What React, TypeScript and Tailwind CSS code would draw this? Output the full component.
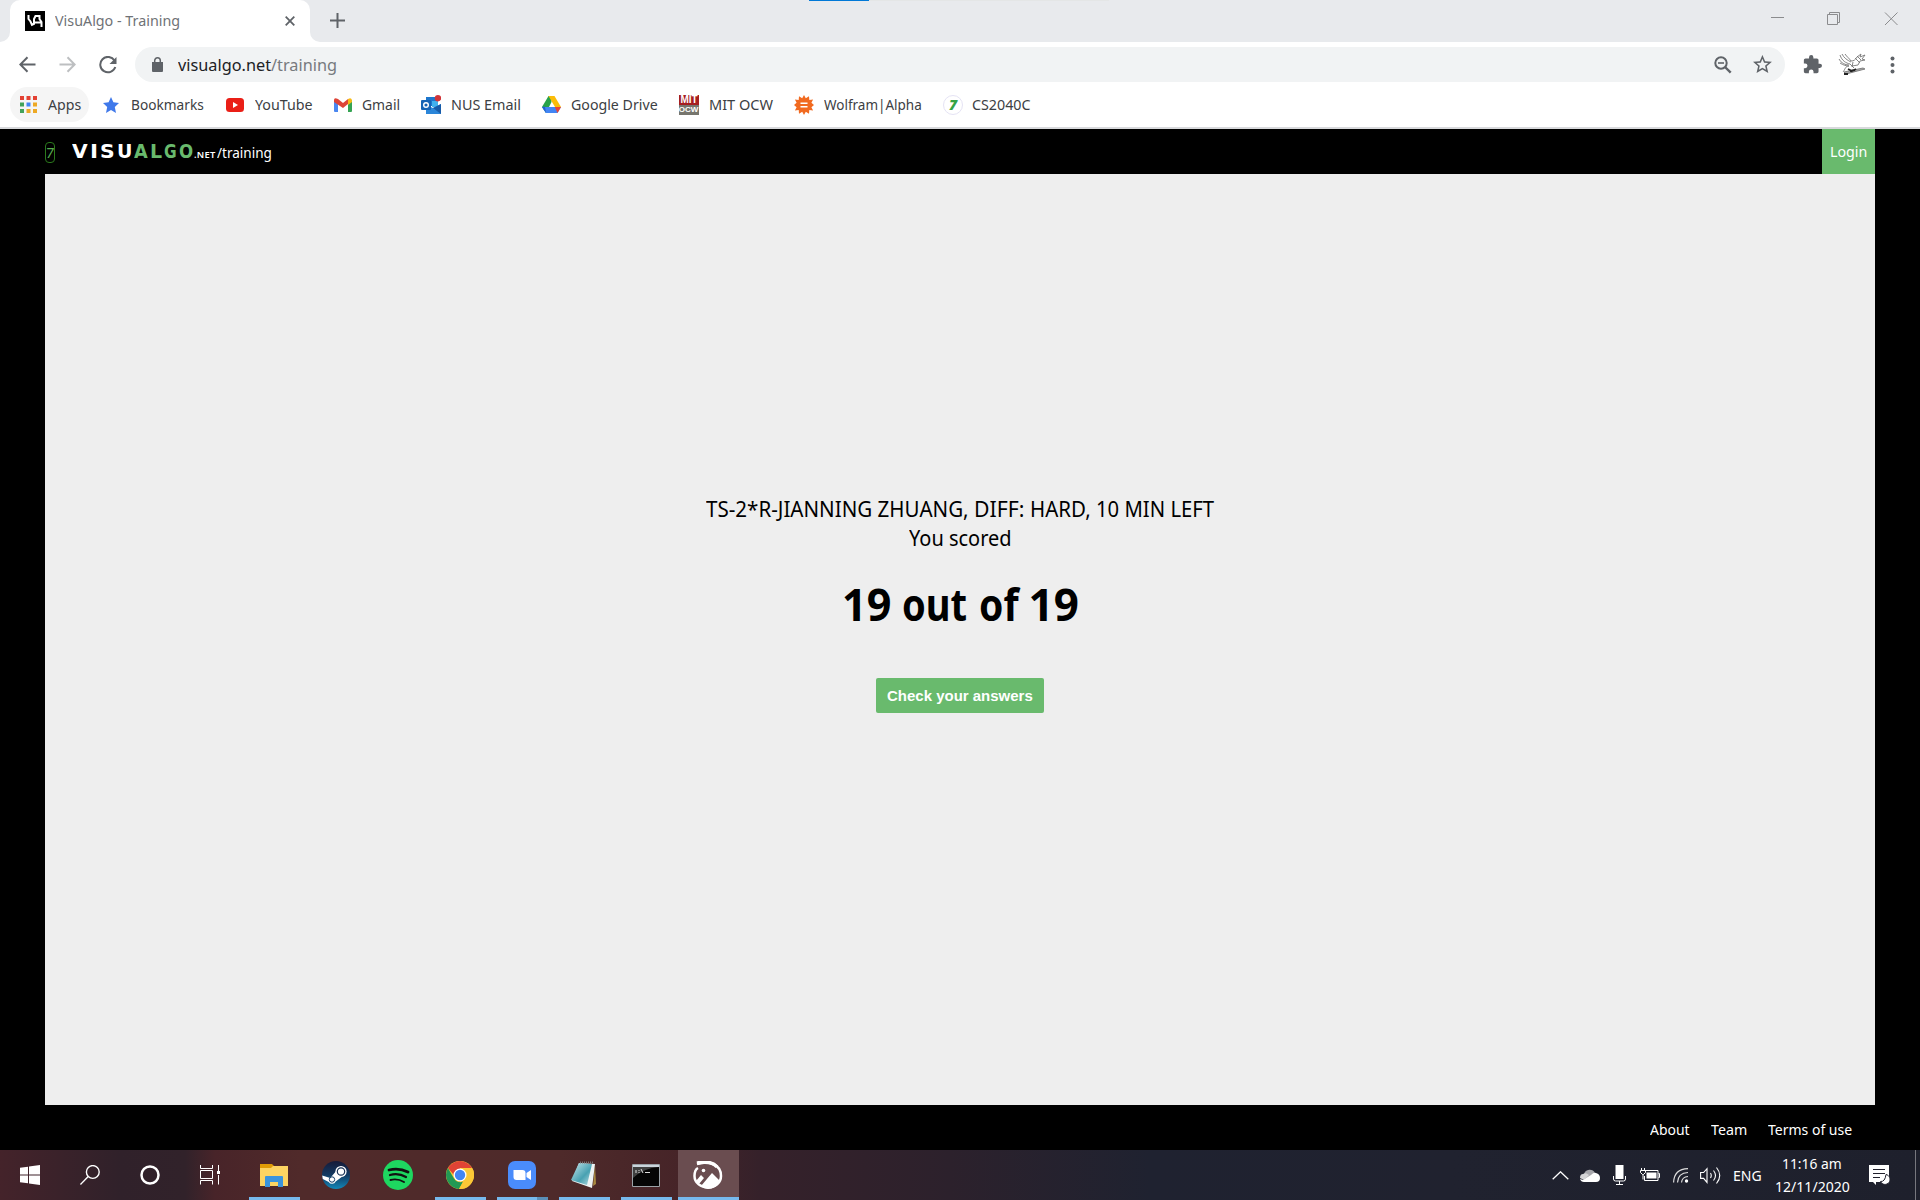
import { useLayoutEffect, useRef, useState } from "react";
import type { ReactNode } from "react";

/* Squeezes or stretches a line of text to the width of its box. */
function Fit({ className, children }: { className: string; children: ReactNode }) {
  const outer = useRef<HTMLSpanElement>(null);
  const inner = useRef<HTMLSpanElement>(null);
  const [scale, setScale] = useState(1);
  useLayoutEffect(() => {
    if (outer.current && inner.current) setScale(outer.current.clientWidth / inner.current.offsetWidth);
  }, []);
  return (
    <span ref={outer} className={"block shrink-0 whitespace-nowrap " + className}>
      <span ref={inner} className="inline-block origin-left" style={{ transform: `scaleX(${scale})` }}>
        {children}
      </span>
    </span>
  );
}

function TabStrip() {
  return (
    <div className="flex h-[42px] bg-[#e8eaed]">
      <div className="relative ml-[10px] flex h-[42px] w-[300px] items-center rounded-t-[10px] bg-white pl-[15px]">
        <svg className="absolute -left-[10px] bottom-0 size-[10px]" viewBox="0 0 10 10"><path d="M10 0v10H0A10 10 0 0 0 10 0Z" fill="#fff" /></svg>
        <svg className="absolute -right-[10px] bottom-0 size-[10px]" viewBox="0 0 10 10"><path d="M0 0v10h10A10 10 0 0 1 0 0Z" fill="#fff" /></svg>
        <svg className="size-5" viewBox="0 0 20 20" fill="none" stroke="#fff" strokeWidth="2">
          <path d="M0 0h20v20H0z" fill="#000" stroke="none" />
          <path d="M3.500 4v4l2 2.500 1.500 3.500 2-1V8l1.500-3h4v3l2 3v5M9 11.500h7" />
        </svg>
        <Fit className="mb-[2px] ml-[10px] w-[125px] text-[15px] leading-5 text-[#6f7276]">VisuAlgo - Training</Fit>
        <svg className="ml-[105px] size-[10px]" viewBox="0 0 10 10"><path d="M.7.7l8.600 8.600M9.300.7L.7 9.300" stroke="#5f6368" strokeWidth="1.800" /></svg>
      </div>
      <svg className="ml-[20px] mt-[13px] size-[15px]" viewBox="0 0 15 15"><path d="M7.500 0v15M0 7.500h15" stroke="#5f6368" strokeWidth="2" /></svg>
      <div className="ml-[464px] h-px w-[60px] bg-[#0078d7]" />
      <div className="h-px w-[240px] bg-[#e4e6e6]" />
      <svg className="ml-[662px] mt-[12px] h-[14px] w-[128px]" viewBox="0 0 128 14" fill="none" stroke="#8b8c8e">
        <path d="M0 5.500h13M56.500 2.500h10v10h-10zM58.500 2.500v-2h10v10h-2M114 .5l12.500 12.500M126.500 .5L114 13" />
      </svg>
    </div>
  );
}

function Toolbar() {
  return (
    <div className="flex h-[45px] items-center bg-white">
      <svg className="ml-[19px] size-[17px]" viewBox="0 0 17 17" fill="none" stroke="#5f6368" strokeWidth="2"><path d="M16.500 8.500H1.500M8.500 1.300L1.300 8.500l7.200 7.200" /></svg>
      <svg className="ml-[23px] size-[17px]" viewBox="0 0 17 17" fill="none" stroke="#bdbfc1" strokeWidth="2"><path d="M.5 8.500h15M8.500 1.300l7.200 7.200-7.200 7.200" /></svg>
      <svg className="ml-[23px] size-[18px]" viewBox="0 0 18 18" fill="none" stroke="#5f6368" strokeWidth="2"><path d="M15.500 4.500A7.700 7.700 0 1 0 16.300 11" /><path d="M17.500 1v7h-7z" fill="#5f6368" stroke="none" /></svg>
      <div className="ml-[18px] flex h-[35px] w-[1650px] items-center rounded-full bg-[#f1f3f4] pl-[17px]">
        <svg className="h-[15px] w-[11px]" viewBox="0 0 11 15"><path d="M0 5h11v9a1 1 0 0 1-1 1H1a1 1 0 0 1-1-1z" fill="#5f6368" /><path d="M2.700 6V3.600a2.800 2.800 0 0 1 5.600 0V6" fill="none" stroke="#5f6368" strokeWidth="1.500" /></svg>
        <Fit className="ml-[15px] w-[159px] text-[17px] leading-6 text-[#202124]">visualgo.net<span className="text-[#777a7e]">/training</span></Fit>
        <svg className="ml-[1377px] size-[18px]" viewBox="0 0 18 18" fill="none" stroke="#5f6368" strokeWidth="2"><circle cx="7" cy="7" r="5.700" /><path d="M11 11l5.700 5.700" strokeWidth="2.400" /><path d="M4 7h6" strokeWidth="1.600" /></svg>
        <svg className="ml-[21px] size-[19px]" viewBox="0 0 24 24" fill="#5f6368"><path d="M22 9.240l-7.190-.62L12 2 9.190 8.630 2 9.240l5.460 4.730L5.820 21 12 17.270 18.180 21l-1.630-7.030L22 9.240zM12 15.400l-3.760 2.270 1-4.280-3.320-2.880 4.380-.38L12 6.100l1.710 4.040 4.380.38-3.320 2.880 1 4.280L12 15.400z" transform="translate(-2.500 -2.500) scale(1.200)" /></svg>
      </div>
      <svg className="ml-[18px] size-[19px]" viewBox="1 1 22 22" fill="#5f6368"><path d="M20.500 11H19V7c0-1.100-.9-2-2-2h-4V3.500a2.500 2.500 0 0 0-5 0V5H4c-1.100 0-2 .9-2 2v3.800h1.500a2.700 2.700 0 0 1 0 5.400H2V20c0 1.100.9 2 2 2h3.800v-1.500a2.700 2.700 0 0 1 5.400 0V22H17c1.100 0 2-.9 2-2v-4h1.500a2.500 2.500 0 0 0 0-5z" /></svg>
      <svg className="ml-[16px] h-[24px] w-[28px]" viewBox="0 0 28 24" fill="none" stroke="#777" strokeWidth=".9">
        <path d="M2 2c2 6 6 8 10 9M4 1c2 4 5 6 9 8M7 1c2 3 4 4 6 7M1 6c2 4 6 6 10 6M2 10c3 2 6 3 9 3M13 8c3 0 4-1 6-4l4-3-1 3 5-2-3 4 3 1-5 1-2 4-6 1M17 5l5 5M19 3l4 4M11 13c-4 0-4 4-6 6M12 11l4 4M15 9l-1 5" />
        <path d="M6 19l19-4 2 1-19 5z" fill="#aaa" /><path d="M10 16l4 2 4-2M6 21l4 0M12 18l5-1" stroke="#222" strokeWidth="1.800" />
      </svg>
      <svg className="ml-[24px] h-[18px] w-[5px]" viewBox="0 0 5 18" fill="#5f6368"><circle cx="2.500" cy="2.500" r="2" /><circle cx="2.500" cy="9" r="2" /><circle cx="2.500" cy="15.500" r="2" /></svg>
    </div>
  );
}

function Bookmarks() {
  const t = "mb-[2px] text-[15px] leading-5 text-[#3c4043] ";
  return (
    <div className="flex h-[40px] items-center bg-white pb-[5px]">
      <div className="ml-[10px] flex h-[35px] w-[79px] items-center rounded-full bg-[#f5f5f5] pl-[10px]">
        <svg className="size-[17px]" viewBox="0 0 17 17">
          <path d="M0 0h4v4H0zM6.500 0h4v4h-4zM13 0h4v4h-4z" fill="#e34133" />
          <path d="M0 6.500h4v4H0zM0 13h4v4H0z" fill="#42a25a" />
          <path d="M6.500 6.500h4v4h-4z" fill="#4285f4" />
          <path d="M13 6.500h4v4h-4zM6.500 13h4v4h-4zM13 13h4v4h-4z" fill="#eda925" />
        </svg>
        <Fit className={t + "ml-[11px] w-[33px]"}>Apps</Fit>
      </div>
      <svg className="ml-[14px] size-4" viewBox="0 0 16 16"><path d="M8 0l2.400 5.300L16 6l-4.200 3.900L13 16l-5-3-5 3 1.200-6.100L0 6l5.600-.7z" fill="#4079ea" /></svg>
      <Fit className={t + "ml-[12px] w-[73px]"}>Bookmarks</Fit>
      <svg className="ml-[22px] h-[14px] w-[18px]" viewBox="0 0 18 14"><rect width="18" height="14" rx="3.500" fill="#ea1f17" /><path d="M7 4v6l5-3z" fill="#fff" /></svg>
      <Fit className={t + "ml-[11px] w-[58px]"}>YouTube</Fit>
      <svg className="ml-[21px] h-[14px] w-[18px]" viewBox="0 0 18 14"><path d="M0 2l4 3v9H1a1 1 0 0 1-1-1z" fill="#4a87f0" /><path d="M18 2l-4 3v9h3a1 1 0 0 0 1-1z" fill="#35a453" /><path d="M0 2q0-3 4-1l5 4 5-4v5L9 10 0 4z" fill="#de4437" /><path d="M14 1q4-2 4 2v1l-4 3z" fill="#f7bb16" /></svg>
      <Fit className={t + "ml-[10px] w-[38px]"}>Gmail</Fit>
      <svg className="ml-[21px] size-5" viewBox="0 0 20 20"><path d="M5 2h11v9H5z" fill="#1d76cc" /><path d="M11 6h6v6h-6z" fill="#42b0ee" /><path d="M5 10l7 3 8-4v10H5z" fill="#2b86d9" /><path d="M12 13l8 6V9z" fill="#175ba8" /><rect y="5" width="10" height="10" rx="1" fill="#1463b5" /><circle cx="5" cy="10" r="2.300" fill="none" stroke="#fff" strokeWidth="1.400" /><circle cx="17" cy="3.200" r="3.200" fill="#d13438" /></svg>
      <Fit className={t + "ml-[10px] w-[70px]"}>NUS Email</Fit>
      <svg className="ml-[21px] h-[17px] w-[19px]" viewBox="0 0 19 17"><path d="M6.500 0h3v6L4 17 0 11z" fill="#27a34a" /><path d="M6.500 0h6L19 11h-6z" fill="#fbbc08" /><path d="M3.500 11H19l-3.500 6H4L0 11z" fill="#4285f4" /><path d="M0 11l3-.5L4 17z" fill="#2363d0" /><path d="M19 11l-3.500 6-2.700-6z" fill="#ea4335" /></svg>
      <Fit className={t + "ml-[10px] w-[87px]"}>Google Drive</Fit>
      <div className="ml-[21px] flex size-5 flex-col overflow-hidden bg-[#77766e] text-center font-['Liberation_Sans'] text-[10px] font-bold leading-[10px] text-white">
        <span className="h-[10px] bg-[#a51e20]">MIT</span><span className="-ml-px text-[8px]">OCW</span>
      </div>
      <Fit className={t + "ml-[10px] w-[64px]"}>MIT OCW</Fit>
      <svg className="ml-[21px] size-5" viewBox="0 0 20 20"><path d="M10 0l1.800 3.300L15 1.200l.3 3.700 3.800-.5-1.700 3.400L20 10l-2.600 2.200 1.700 3.400-3.800-.5-.3 3.700-3.200-2.100L10 20l-1.800-3.300L5 18.800l-.3-3.700-3.800.5 1.700-3.400L0 10l2.600-2.200L.9 4.400l3.800.5L5 1.200l3.200 2.100z" fill="#f16a20" /><path d="M6.500 8.300h7M6.500 11.700h7" stroke="#fff" strokeWidth="1.500" /></svg>
      <Fit className={t + "ml-[10px] w-[98px]"}>Wolfram|Alpha</Fit>
      <div className="ml-[21px] flex size-5 items-center justify-center rounded-full border border-[#e5e3f4] text-[14px] font-black italic leading-none text-[#35a344]">7</div>
      <Fit className={t + "ml-[9px] w-[59px]"}>CS2040C</Fit>
    </div>
  );
}

function Page() {
  return (
    <div className="flex h-[1023px] flex-col border-t-2 border-[#d8d9dc] bg-black px-[45px] text-white">
      <header className="flex h-[45px] shrink-0 items-center">
        <span className="mt-px flex h-[21px] w-[10px] items-center justify-center rounded-[4px] border border-[#2b7a1c] text-[14px] text-[#58ad50]"><span className="-skew-x-6">7</span></span>
        <span className="-mt-px ml-[17px] flex gap-[2px] font-['DejaVu_Sans'] text-[19px] font-bold leading-6">
          <Fit className="w-[16px]">V</Fit>
          <Fit className="w-[8px]">I</Fit>
          <Fit className="w-[15px]">S</Fit>
          <Fit className="w-[15px]">U</Fit>
          <Fit className="w-[14px] text-[#69ba6d]">A</Fit>
          <Fit className="w-[12px] text-[#69ba6d]">L</Fit>
          <Fit className="w-[13px] text-[#69ba6d]">G</Fit>
          <Fit className="w-[14px] text-[#69ba6d]">O</Fit>
        </span>
        <Fit className="ml-px mt-[6px] w-[21px] text-[8px] font-semibold leading-4 tracking-wide">.NET</Fit>
        <Fit className="ml-[2px] mt-px w-[55px] text-[15px] leading-5">/training</Fit>
        <button className="ml-auto flex h-[45px] w-[53px] items-center justify-center bg-[#69ba6d] text-[15px]"><Fit className="w-[37px]">Login</Fit></button>
      </header>
      <main className="flex h-[931px] shrink-0 flex-col items-center bg-[#eee] pt-[320px] text-black">
        <div className="flex text-[22.500px] leading-[29px]">
          <Fit className="w-[263px]">TS-2*R-JIANNING ZHUANG,</Fit>
          <Fit className="ml-[5px] w-[50px]">DIFF:</Fit>
          <Fit className="ml-[6px] w-[61px]">HARD,</Fit>
          <Fit className="ml-[5px] w-[118px]">10 MIN LEFT</Fit>
        </div>
        <Fit className="w-[103px] text-[22.500px] leading-[29px]">You scored</Fit>
        <h1 className="mt-[22px] flex text-[44px] font-bold leading-[60px]">
          <Fit className="w-[49px]">19</Fit>
          <Fit className="ml-[11px] w-[65px]">out</Fit>
          <Fit className="ml-[12px] w-[40px]">of</Fit>
          <Fit className="ml-[10px] w-[50px]">19</Fit>
        </h1>
        <button className="mt-[44px] flex h-[35px] w-[168px] items-center justify-center rounded-[2px] bg-[#69ba6d] font-['Liberation_Sans'] text-[15.500px] font-bold text-white"><Fit className="w-[146px]">Check your answers</Fit></button>
      </main>
      <footer className="flex h-[45px] items-center justify-end gap-[21px] pr-[23px] pt-[2px] text-[15px] leading-5">
        <Fit className="w-[40px]">About</Fit><Fit className="w-[36px]">Team</Fit><Fit className="w-[84px]">Terms of use</Fit>
      </footer>
    </div>
  );
}

function Task({ icon, line }: { icon: ReactNode; line?: string }) {
  return (
    <div className="flex h-[50px] w-[62px] flex-col items-center">
      <div className="flex h-[47px] items-center pt-[3px]">{icon}</div>
      {line && <div className={"h-[3px] w-[51px] " + line} />}
    </div>
  );
}

const blue = "bg-[#76b9ed]";

function Taskbar() {
  return (
    <div className="flex h-[50px] items-center bg-[linear-gradient(90deg,#44232a_0px,#30212a_120px,#31222a_185px,#482429_215px,#502a2a_300px,#4e2a2a_560px,#462428_680px,#35212a_760px,#2c212c_950px,#1f2230_1150px,#20222f_1450px,#1e202c_1920px)] text-white">
      <div className="flex w-[60px] justify-center"><svg className="size-5" viewBox="0 0 20 20" fill="#fff"><path d="M0 2.800L8 1.700v7.800H0zM9 1.500L20 0v9.500H9zM0 10.500h8v7.800l-8-1.100zM9 10.500h11V20L9 18.500z" /></svg></div>
      <div className="flex w-[60px] justify-center"><svg className="size-5" viewBox="0 0 20 20" fill="none" stroke="#fff" strokeWidth="1.400"><circle cx="12.800" cy="7" r="6.400" /><path d="M8.200 11.600L.4 19.500" /></svg></div>
      <div className="flex w-[60px] justify-center"><svg className="size-5" viewBox="0 0 20 20"><circle cx="10" cy="10" r="8.500" fill="none" stroke="#fff" strokeWidth="2.500" /></svg></div>
      <div className="flex w-[60px] justify-center"><svg className="size-5" viewBox="0 0 20 20" fill="none" stroke="#fff"><path d="M.5 0v3.500h12V0M.5 19.500v-4h12v4M.5 5.500h12v8H.5zM18.500 0v6M18.500 10v9.500" /><path d="M17 6h3v3h-3z" fill="#fff" stroke="none" /></svg></div>
      <div className="ml-[3px] flex">
        <Task line={blue} icon={<svg className="h-[24px] w-[28px]" viewBox="0 0 28 24"><path d="M0 1h12l2 2v4H0z" fill="#e09c06" /><path d="M0 5h11l2-2h15v20H0z" fill="#fcd462" /><path d="M5 24V14q0-1 1-1h16q1 0 1 1v10h-5v-5h-8v5z" fill="#3a94dc" /></svg>} />
        <Task icon={<svg className="size-7" viewBox="0 0 28 28"><defs><linearGradient id="st" x2="0" y2="1"><stop stopColor="#171a38" /><stop offset=".5" stopColor="#123a62" /><stop offset="1" stopColor="#1488b8" /></linearGradient></defs><circle cx="14" cy="14" r="14" fill="url(#st)" /><path d="M.2 14.500l8 2.500 6-7 5.500 6-6 4.500a4 4 0 0 1-7 .5L.8 18z" fill="#fff" /><circle cx="19" cy="10.500" r="5.600" fill="#fff" /><circle cx="19" cy="10.500" r="3.700" fill="none" stroke="#193255" strokeWidth="1.200" /><circle cx="10" cy="18.500" r="2.700" fill="none" stroke="#193f68" /></svg>} />
        <Task icon={<svg className="size-[30px]" viewBox="0 0 30 30" fill="none" stroke="#111" strokeLinecap="round"><circle cx="15" cy="15" r="15" fill="#1ed760" stroke="none" /><path d="M6 10q10-2.500 19 2" strokeWidth="2.800" /><path d="M7 15q8.500-2.300 16 2" strokeWidth="2.300" /><path d="M7.500 20q7-1.800 13.500 2" strokeWidth="1.900" /></svg>} />
        <Task line={blue} icon={<svg className="size-7" viewBox="0 0 28 28"><circle cx="14" cy="14" r="14" fill="#fbc736" /><path d="M1.900 7A14 14 0 0 1 26.100 7H14v14z" fill="#e04335" /><path d="M1.900 7L8 17.500a7 7 0 0 0 9 3L13 28A14 14 0 0 1 1.900 7z" fill="#229954" /><path d="M14 7h12.100A14 14 0 0 1 13 28l6-10z" fill="#fbc736" /><circle cx="14" cy="14" r="6.500" fill="#fff" /><circle cx="14" cy="14" r="5.200" fill="#4285f4" /></svg>} />
        <Task line="bg-[linear-gradient(90deg,#76b9ed_40px,#5a8fb8_40px)]" icon={<svg className="size-7" viewBox="0 0 28 28"><rect width="28" height="28" rx="7" fill="#4a8cfb" /><path d="M5.500 9h9a3 3 0 0 1 3 3v7h-9a3 3 0 0 1-3-3zM18.500 12l4.500-3v10l-4.500-3z" fill="#fff" /></svg>} />
        <Task line={blue} icon={<svg className="size-7" viewBox="0 0 28 28"><defs><linearGradient id="np" x2="1" y2="1"><stop stopColor="#c9e8ed" /><stop offset=".6" stopColor="#48a1b2" /><stop offset="1" stopColor="#b9dde3" /></linearGradient></defs><path d="M25 4l1 19-3 2z" fill="#a88940" /><path d="M9 2l16 1-3 24L2 20z" fill="#edf3f4" /><path d="M9 2l13 1-5 21L1 19z" fill="url(#np)" /><path d="M10 1.500h14" stroke="#777" strokeDasharray="1 1" strokeWidth="2" /></svg>} />
        <Task line={blue} icon={<svg className="mr-px h-[23px] w-7" viewBox="0 0 28 23"><path d="M.5.500h27v22H.5z" fill="#050505" stroke="#9ba2a7" /><path d="M1 1h26v2H1z" fill="#cbd5dc" /><path d="M1 3h26Q12 4 1 14z" fill="#404040" /><path d="M4 6v3M7 6v1m0 1v1M9 5l2 4M13 8.500h5" stroke="#ddd" /></svg>} />
        <div className="ml-px flex h-[50px] w-[61px] flex-col items-center bg-[#6a4d50]">
          <div className="flex h-[47px] items-center pr-[2px] pt-[3px]"><svg className="h-[28px] w-[30px]" viewBox="0 0 30 28"><path d="M4 3C15-1 28 3 28 15c0 7-6 11.500-13 11.500S1.500 22 1.500 15C1.500 11 3 8 5 7" fill="none" stroke="#fff" strokeWidth="2.500" /><path d="M4 2C14 0 20 1 24 6" stroke="#fff" strokeWidth="3.500" fill="none" /><path d="M3 20l5-6 3 3-5 6zM8 25L19 12l8 8q-4 8-12 8-4 0-7-3z" fill="#fff" /><circle cx="10.500" cy="9.500" r="1.800" fill="#fff" /></svg></div>
          <div className="h-[3px] w-full bg-[#76b9ed]" />
        </div>
      </div>
      <svg className="ml-[813px] h-[9px] w-[17px]" viewBox="0 0 17 9"><path d="M.7 8.300l7.800-7.500 7.800 7.500" fill="none" stroke="#fff" strokeWidth="1.300" /></svg>
      <svg className="ml-[11px] h-[13px] w-5" viewBox="0 0 20 13"><path d="M4 5a6 6 0 0 1 11-1l-8 6-5-1z" fill="#a8a8ad" /><path d="M3 5q3-2 6 1l-5 5-4-2q0-4 3-4z" fill="#d4d4d6" /><path d="M3 11l8-5q3-3 5-2 4 1 4 5t-4 4H4q-3 0-4-3z" fill="#fff" /></svg>
      <svg className="ml-[13px] h-5 w-[13px]" viewBox="0 0 13 20" fill="none" stroke="#fff"><path d="M2.500 0h8v14h-8z" fill="#fff" stroke="none" /><path d="M.5 11v3q0 2 2 2h8q2 0 2-2v-3M6.500 16v3M3 19.500h7" /></svg>
      <svg className="ml-[14px] h-[14px] w-5" viewBox="0 0 20 14" fill="none" stroke="#fff"><path d="M5 2.500h13v10H4.500V8M18.500 5.500h1v4h-1M1.500 0v2.500M4.500 0v2.500M.5 2.500h5v2L3.500 6.500h-1l-2-2zM3 6.500v5" /><path d="M6.500 4.500h10v6h-10z" fill="#fff" stroke="none" /></svg>
      <svg className="ml-[13px] h-[15px] w-4" viewBox="0 0 16 15" fill="none" stroke="#ddd" strokeWidth="1.200"><path d="M.6 14.500Q1 1 15 .6M4.500 14.500q.5-9.500 10.500-10M8.500 14.500Q9 9 15 8.500" /><circle cx="13.500" cy="13" r="1.700" fill="#fff" stroke="none" /></svg>
      <svg className="ml-[11px] h-[18px] w-[21px]" viewBox="0 0 21 18" fill="none" stroke="#fff" strokeWidth="1.100"><path d="M.6 6.500h3L7 2.600v13.800l-3.400-4h-3zM10.500 7q1.500 2.500 0 5M13.500 4.500q4 5 0 10M16.500 1.500q6.500 8 0 16" /></svg>
      <Fit className="ml-[12px] w-[29px] text-[15px] leading-5">ENG</Fit>
      <div className="-mt-px ml-[13px] flex w-[75px] flex-col items-center text-[15px] leading-[23px]">
        <Fit className="mr-[2px] w-[60px]">11:16 am</Fit><Fit className="w-[75px]">12/11/2020</Fit>
      </div>
      <svg className="ml-[19px] h-[21px] w-[21px]" viewBox="0 0 21 21"><path d="M0 0h20v17H7v3l-3-3H0z" fill="#fff" /><path d="M4 4.500h12M4 8.500h12M4 12.500h7" stroke="#20202c" /><path d="M17 9.500a5 5 0 1 1-5.500 7q4.500.5 5.500-7z" fill="#fff" stroke="#20202c" /></svg>
      <div className="ml-[25px] h-[50px] w-px bg-[#77777e]" />
    </div>
  );
}

export default function App() {
  return (
    <div className="h-[1200px] w-[1920px] overflow-hidden font-['Noto_Sans',sans-serif]">
      <TabStrip />
      <Toolbar />
      <Bookmarks />
      <Page />
      <Taskbar />
    </div>
  );
}
